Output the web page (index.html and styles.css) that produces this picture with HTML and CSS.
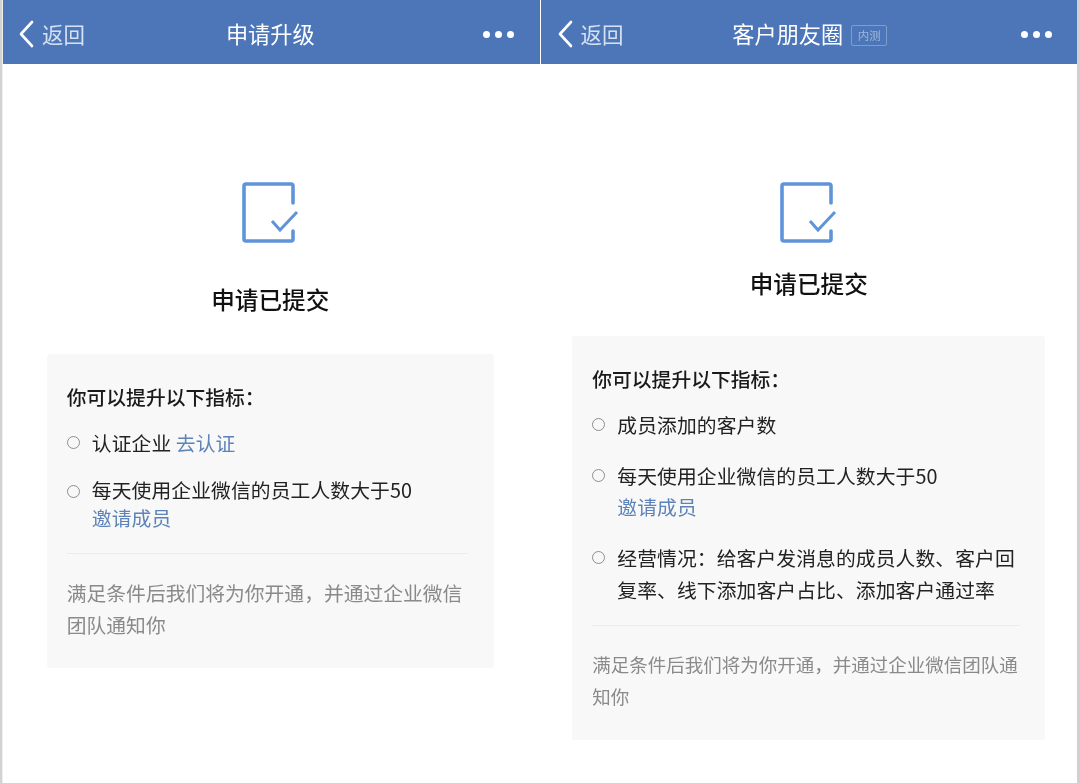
FILE: index.html
```html
<!DOCTYPE html>
<html lang="zh-CN">
<head>
<meta charset="utf-8">
<title>申请已提交</title>
<link rel="stylesheet" href="styles.css">
</head>
<body>
<main class="screen">
  <section class="phone phone-a">
    <header class="nav">
      <div class="nav-back">
        <svg class="chev" viewBox="0 0 16 28"><path d="M14 2 L3 14 L14 26"/></svg>
        <span>返回</span>
      </div>
      <div class="nav-title"><span>申请升级</span></div>
      <div class="dots"><i></i><i></i><i></i></div>
    </header>
    <div class="content">
      <svg class="doc" viewBox="0 0 60 64"><path class="doc-box" d="M52 22 V5 Q52 3 50 3 H5 Q3 3 3 5 V58 Q3 60 5 60 H50 Q52 60 52 58 V50"/><path class="doc-check" d="M31 40 L39 49 L56 31"/></svg>
      <h1 class="done">申请已提交</h1>
      <div class="panel">
        <h2 class="panel-head">你可以提升以下指标&#xFF1A;</h2>
        <ul class="list">
          <li class="item item-first"><span class="ring"></span><p>认证企业 <a>去认证</a></p></li>
          <li class="item item-link"><span class="ring"></span><p>每天使用企业微信的员工人数大于50<br><a>邀请成员</a></p></li>
        </ul>
        <p class="note">满足条件后我们将为你开通&#xFF0C;并通过企业微信团队通知你</p>
      </div>
    </div>
  </section>
  <section class="phone phone-b">
    <header class="nav">
      <div class="nav-back">
        <svg class="chev" viewBox="0 0 16 28"><path d="M14 2 L3 14 L14 26"/></svg>
        <span>返回</span>
      </div>
      <div class="nav-title"><span>客户朋友圈</span><em class="tag">内测</em></div>
      <div class="dots"><i></i><i></i><i></i></div>
    </header>
    <div class="content">
      <svg class="doc" viewBox="0 0 60 64"><path class="doc-box" d="M52 22 V5 Q52 3 50 3 H5 Q3 3 3 5 V58 Q3 60 5 60 H50 Q52 60 52 58 V50"/><path class="doc-check" d="M31 40 L39 49 L56 31"/></svg>
      <h1 class="done">申请已提交</h1>
      <div class="panel">
        <h2 class="panel-head">你可以提升以下指标&#xFF1A;</h2>
        <ul class="list">
          <li class="item item-first"><span class="ring"></span><p>成员添加的客户数</p></li>
          <li class="item item-link"><span class="ring"></span><p>每天使用企业微信的员工人数大于50<br><a>邀请成员</a></p></li>
          <li class="item"><span class="ring"></span><p>经营情况&#xFF1A;给客户发消息的成员人数、客户回复率、线下添加客户占比、添加客户通过率</p></li>
        </ul>
        <p class="note">满足条件后我们将为你开通&#xFF0C;并通过企业微信团队通知你</p>
      </div>
    </div>
  </section>
</main>
</body>
</html>
```
FILE: styles.css
```css
* { box-sizing: border-box; }
html, body { margin: 0; padding: 0; }
body {
  width: 1080px;
  height: 783px;
  overflow: hidden;
  background: #fff;
  font-family: "Noto Sans CJK SC", "Noto Sans", sans-serif;
}
.screen {
  display: flex;
  width: 1080px;
  height: 783px;
  padding: 0 3px;
  gap: 1px;
  background: linear-gradient(90deg, #d2d2d2 0 2px, #eee 2px 3px, #fff 3px 1077px, #d0d0d0 1077px);
  filter: blur(0.35px);
}
.phone { flex: 1 1 0; min-width: 0; background: #fff; }
.nav {
  height: 64px;
  display: flex;
  align-items: center;
  position: relative;
  padding: 3px 25px 0 15px;
  background: #4c76b8;
  color: #fff;
}
.phone-a .nav { padding-right: 26px; }
.phone-b .nav { padding-left: 16px; }
.nav-back {
  display: flex;
  align-items: center;
  gap: 8px;
  font-size: 21.5px;
  line-height: 30px;
  color: #d5e0f0;
  flex: 1;
}
.chev { width: 16px; height: 28px; fill: none; stroke: #fff; stroke-width: 2.6; stroke-linecap: round; stroke-linejoin: round; }
.nav-title {
  position: absolute;
  left: 0;
  right: 0;
  top: 0;
  height: 64px;
  padding-top: 2px;
  display: flex;
  align-items: center;
  justify-content: center;
  gap: 8px;
  font-size: 22.2px;
  font-weight: 400;
}
.phone-a .nav-title { padding-right: 2px; }
.phone-b .nav-title { padding-left: 2px; }
.tag {
  font-style: normal;
  font-size: 11.5px;
  line-height: 19px;
  height: 21px;
  width: 36px;
  margin-top: 5px;
  text-align: center;
  border: 1px solid #7f9dcb;
  color: #9fb6d9;
  border-radius: 2px;
}
.dots { display: flex; gap: 5px; position: relative; margin-top: 1px; }
.dots i { width: 7px; height: 7px; border-radius: 50%; background: #fff; }
.content { display: flex; flex-direction: column; align-items: center; }
.doc { width: 60px; height: 64px; margin-top: 117px; fill: none; stroke: #5f94da; stroke-width: 3.6; }
.doc-box { stroke-linecap: round; stroke-linejoin: round; }
.doc-check { stroke-width: 3; }
.done { margin: 0; font-size: 23.6px; line-height: 32px; font-weight: 500; color: #111; }
.phone-a .done { margin-top: 38px; margin-left: -2px; }
.phone-b .done { margin-top: 22px; }
.panel { background: #f8f8f8; border-radius: 3px; }
.phone-a .panel { width: 447px; margin-top: 39px; margin-left: -2px; padding: 28px 26px 25px 20px; height: 314px; }
.phone-b .panel { width: 473px; margin-top: 37px; padding: 28px 25px 26px 20px; height: 404px; }
.panel-head { margin: 0; font-size: 19.8px; line-height: 30px; font-weight: 500; color: #1a1a1a; }
.list { list-style: none; margin: 0; padding: 0; display: flex; flex-direction: column; }
.item { display: flex; align-items: flex-start; margin-top: 20px; }
.item p { margin: 0; font-size: 19.8px; letter-spacing: 0.1px; line-height: 32px; color: #222; flex: 1; }
.item a { color: #5d83b8; }
.ring { width: 13px; height: 13px; margin: 9px 12px 0 0; border: 1.5px solid #8e8e8e; border-radius: 50%; flex: none; }
.item-first { margin-top: 15px; }
.item-link { margin-top: 19px; }
.item-link p { line-height: 31px; }
.phone-a .item-link { margin-top: 17px; }
.phone-a .item-link p { line-height: 28px; }
.note { margin: 19px 0 0; padding-top: 22px; border-top: 1px solid #ececec; font-size: 19.8px; line-height: 32px; color: #8a8a8a; }
.phone-a .note { margin-top: 21px; padding-top: 23px; }
.phone-b .note { font-size: 18.5px; }
```
